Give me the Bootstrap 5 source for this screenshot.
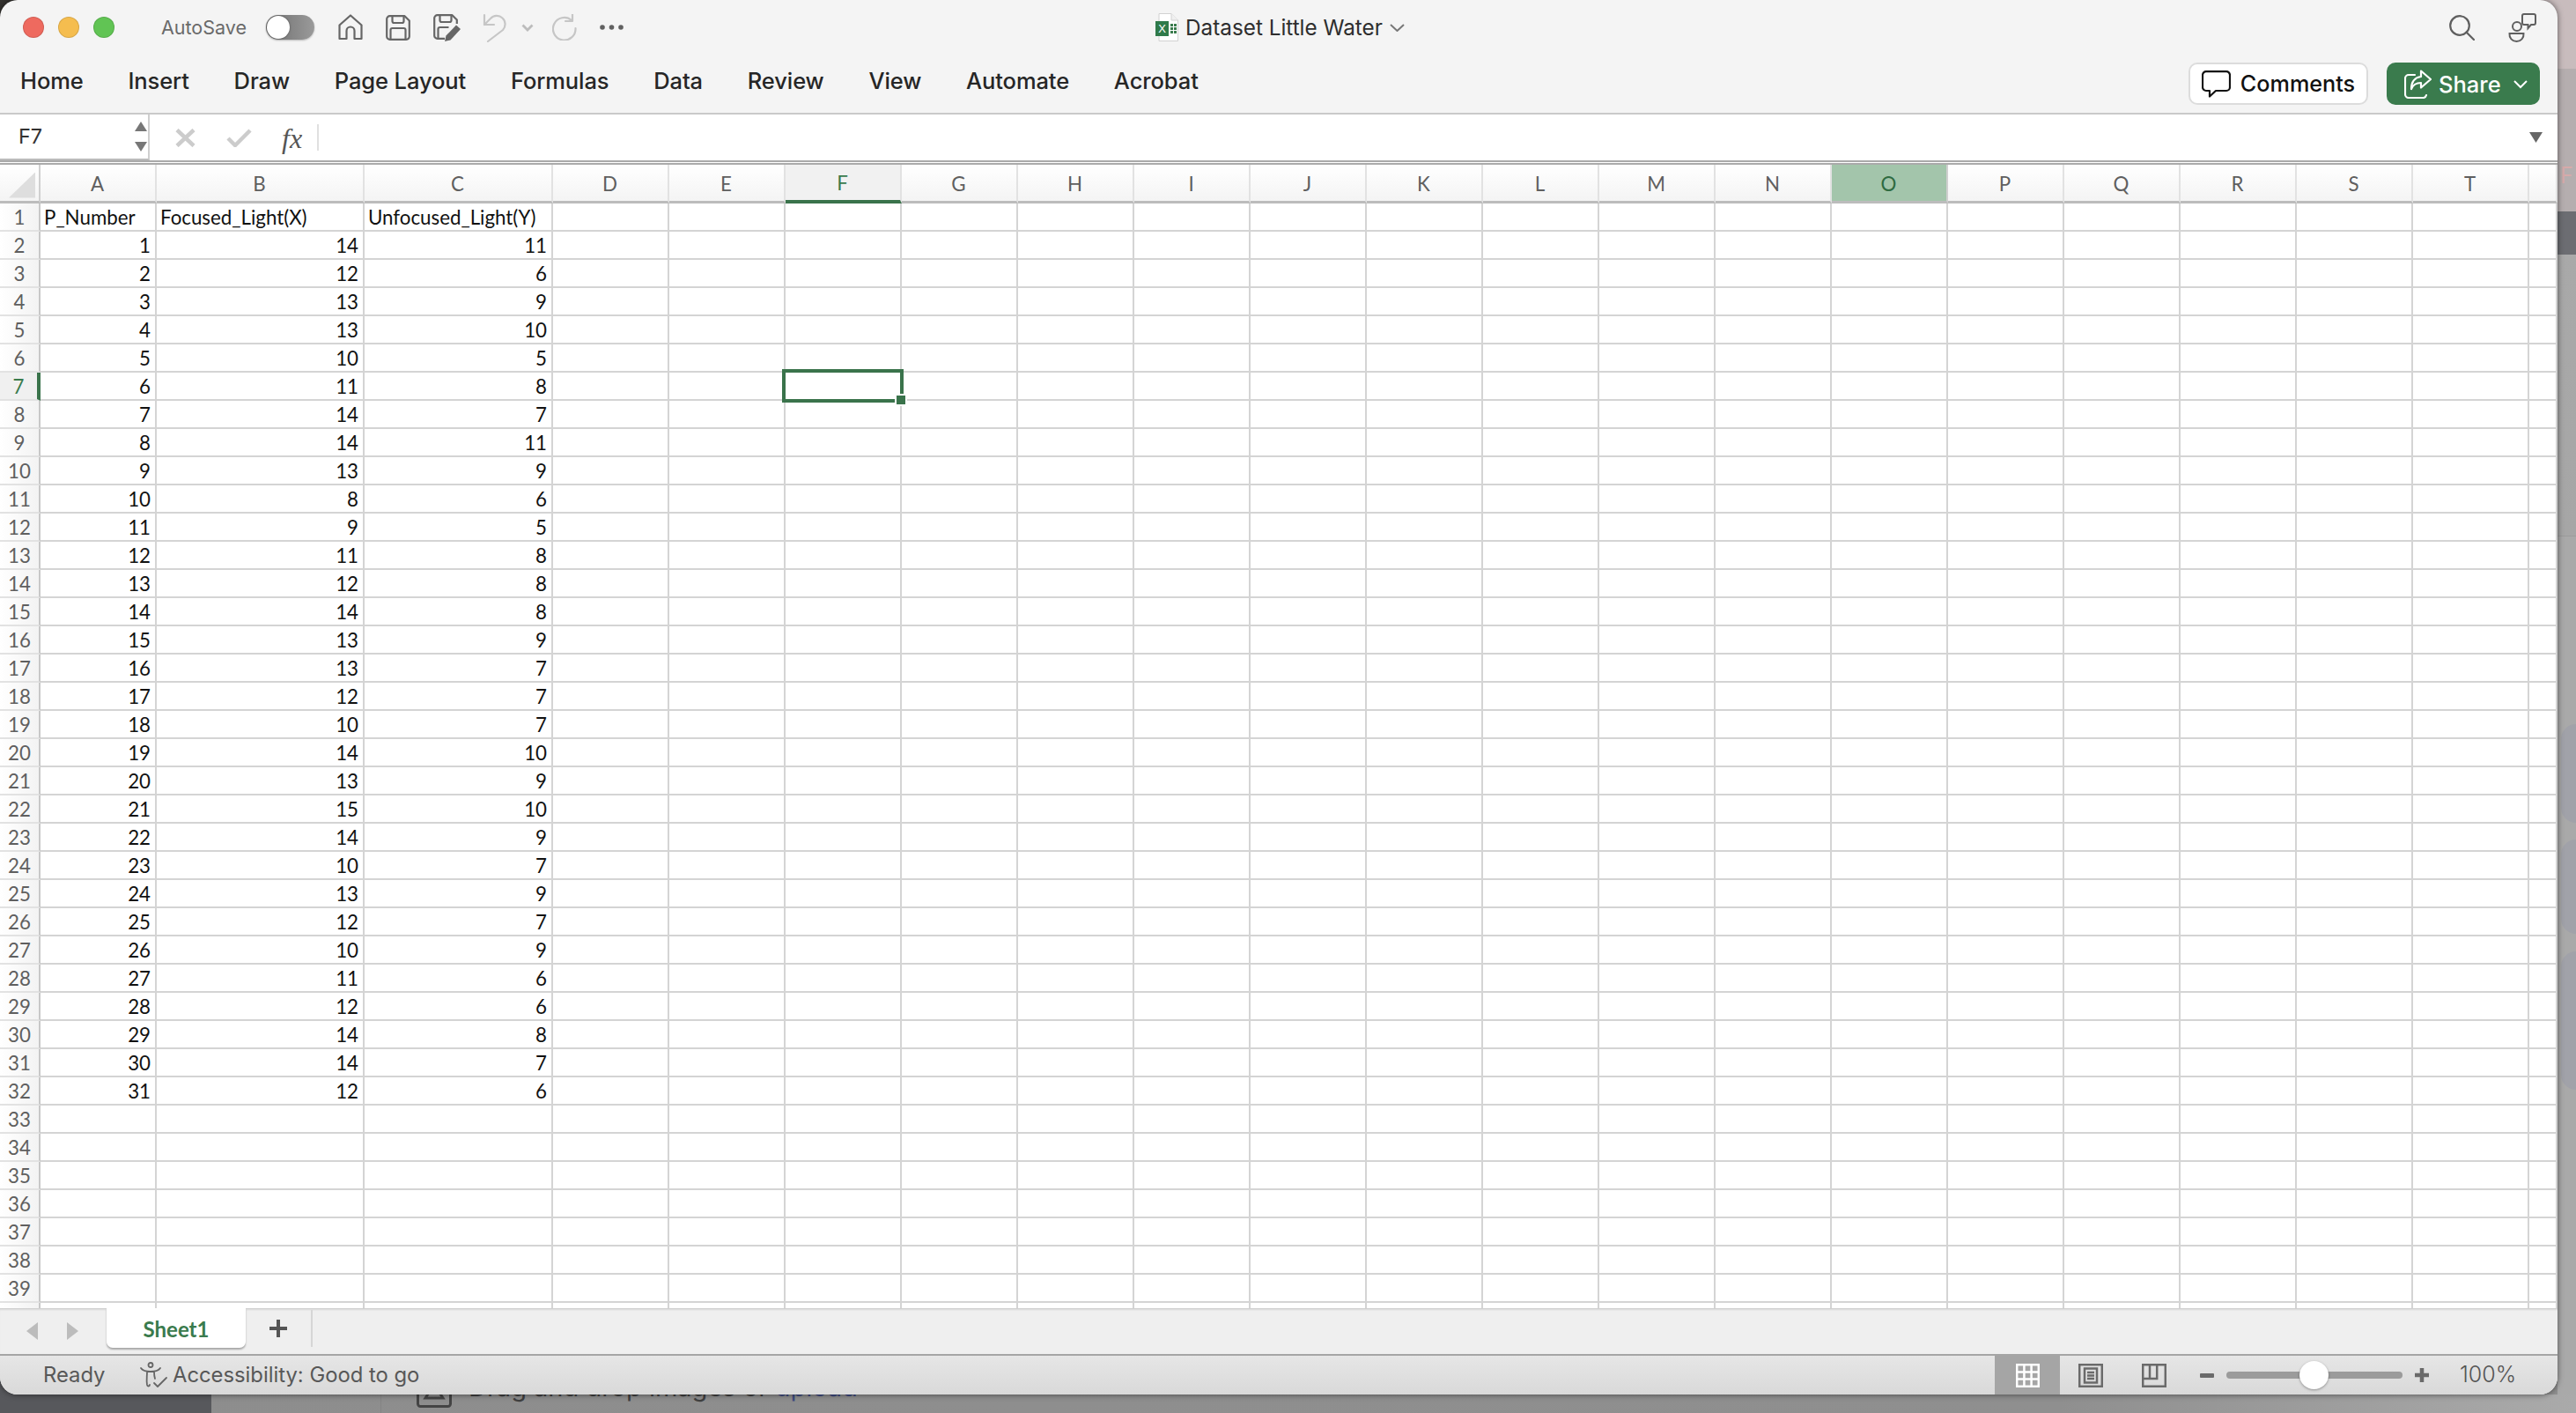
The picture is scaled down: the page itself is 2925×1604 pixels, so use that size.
<!DOCTYPE html>
<html lang="en">
<head>
<meta charset="utf-8">
<title>Dataset Little Water</title>
<link href="https://cdn.jsdelivr.net/npm/bootstrap@5.3.0/dist/css/bootstrap.min.css" rel="stylesheet">
<style>
html,body{margin:0;height:100%;}
body.desk{width:2925px;height:1604px;overflow:hidden;background:#8f8f8f;font-family:"Inter","Liberation Sans",sans-serif;}
.deskrow{height:1583px;background:
  linear-gradient(90deg,#34322f 0,#34322f 50%,#c8bcbd 50%,#c8bcbd 100%) top/100% 50% no-repeat,
  linear-gradient(90deg,#57585c 0,#57585c 50%,#8f8f8f 50%,#8f8f8f 100%) bottom/100% 50% no-repeat;}
.xlwin{width:2904px;height:1583px;position:relative;z-index:2;border-radius:20px;overflow:hidden;background:#f4f4f4;box-shadow:0 0 7px rgba(0,0,0,.55);}
.titlebar{height:62px;position:relative;padding-left:26px;}
.dot{width:24px;height:24px;border-radius:50%;border:1px solid rgba(0,0,0,.12);}
.dot-r{background:#ee6a5f;margin-right:16px;}
.dot-y{background:#f5bd4f;margin-right:16px;}
.dot-g{background:#61c454;}
.asave{font-size:21.5px;color:#6a6a6a;margin-left:53px;margin-right:22px;}
.tgl{width:55px;height:28px;border-radius:14px;background:linear-gradient(90deg,#6d6d6d,#9a9a9a);position:relative;margin-right:27px;box-shadow:0 1px 2px rgba(0,0,0,.25);}
.tgl i{display:block;width:26px;height:26px;border-radius:50%;background:#fff;margin:1px;box-shadow:0 0 2px rgba(0,0,0,.5);}
.qa svg{display:block;}
.doc{position:absolute;left:1312px;top:0;height:62px;font-size:24.3px;color:#2e2e2e;}
.tr-tools{position:absolute;right:24px;top:0;height:62px;gap:38px;}
.ribbon{height:66px;border-bottom:0;align-items:flex-start;padding:0 20px 0 23px;position:relative;}
.rtabs{gap:50.8px;padding-top:15px;}
.rtabs .nav-link{padding:0;font-size:25.5px;font-weight:500;color:#262626;line-height:30px;letter-spacing:-.1px;}
.rbtns{margin-left:auto;gap:21px;padding-top:9px;}
.bt-com{width:204px;height:48px;background:#fff;border:2px solid #dcdcdc;border-radius:10px;color:#111;font-size:25.2px;font-weight:500;padding:1px 0 0;gap:11px;line-height:1;}
.bt-com:hover{background:#fff;color:#111;border-color:#dcdcdc;}
.bt-sh{width:174px;height:48px;background:#3a7b4d;border:0;border-radius:10px;color:#fff;font-size:25.5px;font-weight:500;padding:1px 14px 0 20px;line-height:1;}
.bt-sh:hover{background:#3a7b4d;color:#fff;}
.fbar{height:59px;background:#fff;border-top:2px solid #c9c9c9;position:relative;}
.fbar-in{height:52px;}
.namebox{width:170px;height:52px;border-right:2px solid #cfcfcf;border-bottom:2px solid #bbb;padding-left:21px;font-size:23.5px;color:#333;position:relative;}
.spin{position:absolute;left:153px;top:8px;gap:12px;}
.fn{width:206px;padding-left:29px;}
.fx{font-family:"Liberation Serif",serif;font-style:italic;font-size:32px;color:#555;margin-left:34px;width:42px;line-height:1;border-right:2px solid #e0e0e0;height:30px;}
.fline{height:5px;border-top:2px solid #aaa;border-bottom:2px solid #aaa;background:#fff;}
.fdrop{margin-left:auto;margin-right:17px;}
.gridwrap{height:1298px;overflow:hidden;background:#fff;position:relative;}
table.sheet{border-collapse:separate;border-spacing:0;table-layout:fixed;width:2904px;font-family:"Lato","Liberation Sans",sans-serif;font-size:22.3px;color:#111;}
.sheet th,.sheet td{padding:2px 5px 0 4px;height:32px;line-height:28px;border-right:2px solid #d4d4d4;border-bottom:2px solid #d4d4d4;white-space:nowrap;font-weight:400;}
.sheet td.nm{text-align:right;padding-right:5px;}
.sheet thead th{height:44px;text-align:center;color:#5f5f5f;background:linear-gradient(#fff,#f4f4f4);border-bottom:3px solid #bcbcbc;border-right:2px solid #e2e2e2;}
.sheet thead th.csel{background:#f1f1f1;color:#3a7b4d;border-bottom:4px solid #3a734b;}
.sheet thead th.csl2{background:#a3c5ab;color:#2f6b41;border-right-color:#cfcfcf;}
.sheet thead th.corner{padding:0;position:relative;border-right:2px solid #d0d0d0;}
.corner-t{display:block;width:30px;height:29px;margin:5px 0 0 10px;background:#dedede;clip-path:polygon(100% 0,100% 100%,0 100%);}
.sheet tbody th{text-align:center;color:#5f5f5f;padding:2px 0 0;background:linear-gradient(90deg,#fff,#f3f3f3);border-bottom-color:#e2e2e2;border-right-color:#c8c8c8;}
.sheet tbody th.rsel{background:#f0f0f0;color:#3a7b4d;border-right:4px solid #3a734b;}
.cellsel{position:relative;}
.selbox{position:absolute;left:-4px;top:-4px;width:138px;height:38px;border:4px solid #3a734b;pointer-events:none;}
.selh{position:absolute;left:126px;top:26px;width:10px;height:10px;background:#3a734b;outline:2px solid #fff;}
.sheetbar{height:52px;background:#efefef;box-shadow:inset 0 3px 3px -2px rgba(0,0,0,.2);position:relative;}
.tabnav{width:121px;padding-left:30px;gap:33px;}
.tri-l{width:0;height:0;border:solid transparent;border-width:10px 13px 10px 0;border-right-color:#bcbcbc;}
.tri-r{width:0;height:0;border:solid transparent;border-width:10px 0 10px 13px;border-left-color:#bcbcbc;}
.sheettab{width:158px;height:45px;background:#fff;border-radius:0 0 7px 7px;box-shadow:0 2px 2px rgba(0,0,0,.3);color:#3a7b4d;font-family:"Lato",sans-serif;font-weight:700;font-size:24px;line-height:47px;text-align:center;align-self:flex-start;}
.addbtn{width:76px;border-right:2px solid #d6d6d6;height:42px;align-self:flex-start;margin-top:2px;}
.stbar{height:46px;border-top:2px solid #a5a5a5;background:linear-gradient(#e6e6e6,#d9d9d9);color:#585858;font-size:23.8px;padding-left:49px;position:relative;}
.st-ready{width:109px;}
.st-acc{gap:5px;}
.st-right{margin-left:auto;height:44px;}
.vw-on{width:74px;height:44px;background:#a5a5a5;margin-right:21px;}
.vw-ic{margin-right:44px;}
.zm-minus{width:16px;height:5px;background:#6a6a6a;border-radius:1px;margin-right:14px;margin-left:-6px;}
.zm-track{width:200px;height:8px;border-radius:4px;background:#9b9b9b;position:relative;}
.zm-thumb{position:absolute;left:83px;top:-12px;width:33px;height:32px;border-radius:50%;background:#fff;box-shadow:0 1px 3px rgba(0,0,0,.35);}
.zm-plus{margin-left:14px;margin-right:35px;}
.zm-val{width:111px;font-size:25px;color:#555;font-weight:300;}
.rstrip{width:21px;height:1583px;overflow:hidden;background:#a9a9a9;}
.rs1{height:78px;background:#c8bcbd;}
.rs2{height:162px;background:#b5aeaf;color:#d6aaaa;font-size:25px;padding:106px 0 0 3px;line-height:30px;white-space:nowrap;}
.rs3{height:49px;background:#6c6d72;}
.rs4{height:320px;background:linear-gradient(#a9a9a9,#a6a6a6);border-bottom:1px solid #9b9b9b;}
.rs5{height:213px;background:#a9a9a9;padding-top:213px;}
.blob{background:#a1a2a9;border-radius:30px 0 0 30px;margin-left:4px;}
.b1{height:112px;margin-top:0;}
.b2{height:107px;margin-top:19px;}
.b3{height:157px;margin-top:20px;}
.botstrip{height:21px;overflow:visible;background:linear-gradient(90deg,#8d8d8d 0,#8f8f8f 80%,#aaa 100%);}
.bs-side{width:240px;height:21px;background:#57585c;}
.bs-a{width:193px;height:21px;border-right:1px solid #848484;}
.bs-up{margin:-23px 0 0 40px;color:#3f3f3f;font-size:29px;line-height:30px;height:30px;position:relative;left:0;white-space:nowrap;}
.bs-up b{font-weight:400;color:#3e4a80;}
.bs-txt{margin-left:19px;margin-top:0;}
</style>
</head>
<body class="desk">
<div class="d-flex deskrow">
<main class="xlwin d-flex flex-column">
  <div class="titlebar d-flex align-items-center qa">
    <span class="dot dot-r"></span><span class="dot dot-y"></span><span class="dot dot-g"></span>
    <span class="asave">AutoSave</span>
    <span class="tgl d-block"><i></i></span>
    <svg width="28" height="30" viewBox="0 0 28 30" fill="none" stroke="#666" stroke-width="2.2" stroke-linejoin="round" stroke-linecap="round"><path d="M1.5 12.5 14 1.5l12.500 11V28H18.500V19a4.500 4.500 0 0 0-9 0v9H1.500z"/></svg>
    <svg style="margin-left:26px" width="28" height="29" viewBox="0 0 28 29" fill="none" stroke="#666" stroke-width="2.200" stroke-linejoin="round"><path d="M5 1.200h16.500L26.800 6.500V24a3.500 3.500 0 0 1-3.500 3.800H5A3.500 3.500 0 0 1 1.200 24V5A3.500 3.500 0 0 1 5 1.200z"/><path d="M7.500 1.200V7a2 2 0 0 0 2 2h9a2 2 0 0 0 2-2V1.200M5.500 27.800V17a2 2 0 0 1 2-2h13a2 2 0 0 1 2 2v10.800"/></svg>
    <svg style="margin-left:26px" width="32" height="31" viewBox="0 0 32 31" fill="none" stroke="#666" stroke-width="2.200" stroke-linejoin="round"><path d="M13 27.800H5A3.500 3.500 0 0 1 1.200 24V5A3.500 3.500 0 0 1 5 1.200h16.500L26.800 6.500V11"/><path d="M7.500 1.200V7a2 2 0 0 0 2 2h9a2 2 0 0 0 2-2V1.200M5.500 27.800V17a2 2 0 0 1 2-2h10"/><path d="M26 12.500l5 4.500-11.500 12.500-6.500 1.500 1.500-6.500z" fill="#666" stroke="none"/></svg>
    <svg style="margin-left:24px" width="27" height="33" viewBox="0 0 27 33" fill="none" stroke="#c6c6c6" stroke-width="2.200" stroke-linecap="round" stroke-linejoin="round"><path d="M2 2v11h11"/><path d="M2 13 9 6a9.500 9.500 0 0 1 14 13L6 32"/></svg>
    <svg style="margin-left:17px" width="14" height="9" viewBox="0 0 14 9" fill="none" stroke="#bcbcbc" stroke-width="2.800"><path d="M1.500 1.500 7 7l5.500-5.500"/></svg>
    <svg style="margin-left:21px" width="28" height="30" viewBox="0 0 28 30" fill="none" stroke="#c6c6c6" stroke-width="2.200" stroke-linecap="round" stroke-linejoin="round"><path d="M22 7A12.800 12.800 0 1 0 26.500 16"/><path d="M23 0v8h-8"/></svg>
    <svg style="margin-left:26px" width="27" height="6" viewBox="0 0 27 6" fill="#606060"><circle cx="3" cy="3" r="2.800"/><circle cx="13.500" cy="3" r="2.800"/><circle cx="24" cy="3" r="2.800"/></svg>
    <div class="doc d-flex align-items-center">
      <svg width="26" height="32" viewBox="0 0 26 32"><path d="M4 .5h14L25.500 8v23.500H4z" fill="#fff" stroke="#d2d2d2"/><path d="M18 .5V8h7.500" fill="#f0f0f0" stroke="#d2d2d2"/><rect y="9" width="15" height="17" fill="#2f7a4a"/><text x="7.500" y="22" font-size="13" font-family="Liberation Sans,sans-serif" fill="#fff" text-anchor="middle">X</text><path d="M17 12h3v3h-3zm4 0h3v3h-3zm-4 4h3v3h-3zm4 0h3v3h-3zm-4 4h3v3h-3zm4 0h3v3h-3z" fill="#3a7b4d"/></svg>
      <span class="ms-2">Dataset Little Water</span>
      <svg class="ms-2" width="17" height="9" viewBox="0 0 17 9" fill="none" stroke="#777" stroke-width="2"><path d="M1 1l7.500 7L16 1"/></svg>
    </div>
    <div class="tr-tools d-flex align-items-center">
      <svg width="29" height="29" viewBox="0 0 29 29" fill="none" stroke="#5f5f5f" stroke-width="2.200" stroke-linecap="round"><circle cx="12" cy="12" r="10.800"/><path d="M19.500 19.500l8.500 8.500"/></svg>
      <svg width="32" height="33" viewBox="0 0 32 33" fill="none" stroke="#5f5f5f" stroke-width="2"><circle cx="10" cy="15" r="5"/><path d="M1.500 23h16c.500 5-3 9-8 9s-8.500-4-8-9z"/><path d="M18 1h11a2 2 0 0 1 2 2v8a2 2 0 0 1-2 2h-3l-3.500 4v-4H18a2 2 0 0 1-2-2V3a2 2 0 0 1 2-2z" fill="#f4f4f4"/></svg>
    </div>
  </div>
  <div class="ribbon d-flex">
    <nav class="nav rtabs">
      <a class="nav-link" href="#">Home</a><a class="nav-link" href="#">Insert</a><a class="nav-link" href="#">Draw</a><a class="nav-link" href="#">Page Layout</a><a class="nav-link" href="#">Formulas</a><a class="nav-link" href="#">Data</a><a class="nav-link" href="#">Review</a><a class="nav-link" href="#">View</a><a class="nav-link" href="#">Automate</a><a class="nav-link" href="#">Acrobat</a>
    </nav>
    <div class="rbtns d-flex">
      <button class="btn bt-com d-flex align-items-center justify-content-center" type="button">
        <svg width="33" height="31" viewBox="0 0 33 31" fill="none" stroke="#111" stroke-width="2.200" stroke-linejoin="round"><path d="M5 1.200h23a4 4 0 0 1 4 4V19a4 4 0 0 1-4 4H16l-7 6.500V23H5a4 4 0 0 1-4-4V5.200a4 4 0 0 1 4-4z"/></svg>
        <span>Comments</span>
      </button>
      <button class="btn bt-sh d-flex align-items-center" type="button">
        <svg width="31" height="33" viewBox="0 0 31 33" fill="none" stroke="#fff" stroke-width="2.200" stroke-linejoin="round" stroke-linecap="round"><path d="M12 6H5a4 4 0 0 0-4 4v18a4 4 0 0 0 4 4h17a4 4 0 0 0 3-3"/><path d="M19 1.500 30 11 19 20.500V15c-6 0-9 2-11 7 0-8 4-13 11-14z"/></svg>
        <span class="ms-2">Share</span>
        <svg class="ms-auto" width="16" height="10" viewBox="0 0 16 10" fill="none" stroke="#fff" stroke-width="2"><path d="M1 1l7 7 7-7"/></svg>
      </button>
    </div>
  </div>
  <div class="fbar">
    <div class="d-flex align-items-center fbar-in">
      <div class="namebox d-flex align-items-center">F7
        <div class="spin d-flex flex-column">
          <svg width="14" height="11" viewBox="0 0 14 11" fill="#777"><path d="M7 0l7 11H0z"/></svg>
          <svg width="14" height="11" viewBox="0 0 14 11" fill="#777"><path d="M0 0h14L7 11z"/></svg>
        </div>
      </div>
      <div class="d-flex align-items-center fn">
        <svg width="23" height="21" viewBox="0 0 23 21" stroke="#ccc" stroke-width="4.500" fill="none"><path d="M2 1.500 21 19.500M21 1.500 2 19.500"/></svg>
        <svg style="margin-left:35px" width="29" height="21" viewBox="0 0 29 21" stroke="#ccc" stroke-width="4.500" fill="none"><path d="M2 11l8 8L27 2"/></svg>
        <span class="fx text-nowrap">fx</span>
      </div>
      <svg class="fdrop" width="15" height="12" viewBox="0 0 15 12" fill="#666"><path d="M0 0h15L7.500 12z"/></svg>
    </div>
    <div class="fline"></div>
  </div>
  <div class="gridwrap"><table class="sheet" id="sheet"></table></div>
  <div class="sheetbar d-flex align-items-center">
    <div class="tabnav d-flex align-items-center"><span class="tri-l"></span><span class="tri-r"></span></div>
    <div class="sheettab">Sheet1</div>
    <div class="addbtn d-flex align-items-center justify-content-center">
      <svg width="22" height="22" viewBox="0 0 22 22" stroke="#555" stroke-width="4" fill="none"><path d="M11 1v20M1 11h20"/></svg>
    </div>
  </div>
  <div class="stbar d-flex align-items-center">
    <span class="st-ready">Ready</span>
    <span class="d-flex align-items-center st-acc">
      <svg width="33" height="30" viewBox="0 0 33 30" fill="none" stroke="#666" stroke-width="1.800" stroke-linecap="round" stroke-linejoin="round"><circle cx="13" cy="3.500" r="2.500"/><path d="M2 7c2 3 6 4 11 4s9-1 11-4M9 11c0 6-1 10 0 15 .5 2 3 2 3 0M17 11c0 3 0 5 1 8"/><path d="M17 24l4 4 10-10"/></svg>
      <span>Accessibility: Good to go</span>
    </span>
    <div class="st-right d-flex align-items-center">
      <div class="vw-on d-flex align-items-center justify-content-center">
        <svg width="27" height="27" viewBox="0 0 27 27" fill="none" stroke="#fff" stroke-width="2.500"><rect x="1.200" y="1.200" width="24.600" height="24.600"/><path d="M9.400 1v25M17.600 1v25M1 9.400h25M1 17.600h25"/></svg>
      </div>
      <svg class="vw-ic" width="28" height="27" viewBox="0 0 28 27" fill="none" stroke="#6a6a6a" stroke-width="2.500"><rect x="1.200" y="1.200" width="25.600" height="24.600"/><rect x="7" y="5.500" width="14" height="16"/><path d="M10 10h8M10 13.500h8M10 17h8"/></svg>
      <svg class="vw-ic" width="28" height="27" viewBox="0 0 28 27" fill="none" stroke="#6a6a6a" stroke-width="2.500"><path d="M1.200 1.200h25.600v24.600H1.200zM1.200 17h16V1.200M9 1.200V17"/></svg>
      <span class="zm-minus"></span>
      <div class="zm-track"><span class="zm-thumb"></span></div>
      <svg class="zm-plus" width="16" height="16" viewBox="0 0 16 16" stroke="#6a6a6a" stroke-width="4.500" fill="none"><path d="M8 0v16M0 8h16"/></svg>
      <span class="zm-val">100%</span>
    </div>
  </div>
</main>
<aside class="rstrip d-flex flex-column">
  <div class="rs1"></div>
  <div class="rs2">F</div>
  <div class="rs3"></div>
  <div class="rs4"></div>
  <div class="rs5"></div>
  <div class="blob b1"></div><div class="blob b2"></div><div class="blob b3"></div>
</aside>
</div>
<div class="botstrip d-flex">
  <div class="bs-side"></div>
  <div class="bs-a"></div>
  <div class="bs-up d-flex">
    <svg width="40" height="38" viewBox="0 0 40 38" fill="none" stroke="#444" stroke-width="3"><rect x="1.500" y="1.500" width="37" height="35" rx="3"/><path d="M10 27 20 12l10 15z"/></svg>
    <span class="bs-txt">Drag and drop images or <b>upload</b></span>
  </div>
</div>
<script src="https://cdn.jsdelivr.net/npm/bootstrap@5.3.0/dist/js/bootstrap.bundle.min.js"></script>
<script>
const data=[[1,14,11],[2,12,6],[3,13,9],[4,13,10],[5,10,5],[6,11,8],[7,14,7],[8,14,11],[9,13,9],[10,8,6],[11,9,5],[12,11,8],[13,12,8],[14,14,8],[15,13,9],[16,13,7],[17,12,7],[18,10,7],[19,14,10],[20,13,9],[21,15,10],[22,14,9],[23,10,7],[24,13,9],[25,12,7],[26,10,9],[27,11,6],[28,12,6],[29,14,8],[30,14,7],[31,12,6]];
const letters="ABCDEFGHIJKLMNOPQRST".split("");
const widths=[46,132,236,214].concat(Array(17).fill(132)).concat([32]);
const head=["P_Number","Focused_Light(X)","Unfocused_Light(Y)"];
let h='<colgroup>'+widths.map(w=>'<col style="width:'+w+'px">').join('')+'</colgroup>';
h+='<thead><tr><th class="corner"><span class="corner-t"></span></th>';
letters.forEach(l=>{h+='<th class="'+(l==='F'?'csel':l==='O'?'csl2':'')+'">'+l+'</th>';});
h+='<th></th></tr></thead><tbody>';
for(let r=1;r<=40;r++){
  h+='<tr><th class="'+(r===7?'rsel':'')+'">'+(r<40?r:'')+'</th>';
  for(let c=0;c<21;c++){
    let v='',cl='';
    if(c<3){ if(r===1) v=head[c]; else if(r<=32){v=data[r-2][c];cl='nm';} }
    if(r===7&&c===5){cl='cellsel';v='<span class="selbox"></span><span class="selh"></span>';}
    h+='<td class="'+cl+'">'+v+'</td>';
  }
  h+='</tr>';
}
h+='</tbody>';
document.getElementById('sheet').innerHTML=h;
</script>
</body>
</html>
